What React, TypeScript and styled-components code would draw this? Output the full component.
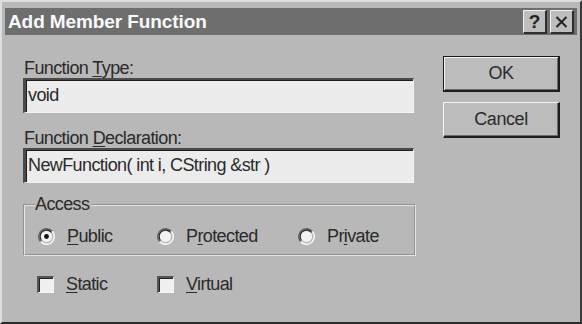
import styled, { createGlobalStyle } from 'styled-components'

const GlobalStyle = createGlobalStyle`
  html, body {
    margin: 0;
    padding: 0;
    background: #b8b8b8;
  }
  * {
    box-sizing: border-box;
  }
`;

const Window = styled.div`
  width: 582px;
  height: 324px;
  background: #b8b8b8;
  border-top: 2px solid #dedede;
  border-left: 2px solid #dedede;
  border-right: 2px solid #3a3a3a;
  border-bottom: 2px solid #2a2a2a;
  padding: 5px 3px 3px 3px;
  font-family: "Liberation Sans", Arial, sans-serif;
  color: #2a2a2a;
  display: flex;
  flex-direction: column;
`;

const TitleBar = styled.div`
  height: 27px;
  margin-top: 1px;
  background: #6e6e6e;
  display: flex;
  align-items: center;
  justify-content: space-between;
  padding: 0 3px 0 3px;
`;

const Title = styled.span`
  color: #fafafa;
  font-weight: bold;
  font-size: 19px;
  letter-spacing: -0.1px;
  line-height: 27px;
`;

const TitleButtons = styled.div`
  display: flex;
  gap: 3px;
  margin-top: 1px;
`;

const TitleButton = styled.div`
  width: 24px;
  height: 24px;
  background: #bdbdbd;
  border-top: 1px solid #f2f2f2;
  border-left: 1px solid #f2f2f2;
  border-right: 2px solid #2e2e2e;
  border-bottom: 2px solid #2e2e2e;
  display: flex;
  align-items: center;
  justify-content: center;
  font-size: 19px;
  font-weight: bold;
  color: #222;
  line-height: 1;
`;

const Body = styled.div`
  display: flex;
  padding-left: 18px;
`;

const LeftColumn = styled.div`
  width: 393px;
  padding-top: 24px;
  display: flex;
  flex-direction: column;
`;

const FieldLabel = styled.div<{ $top?: number }>`
  font-size: 18px;
  letter-spacing: -0.6px;
  line-height: 19px;
  padding-left: 1px;
  margin-top: ${(p) => p.$top ?? 0}px;
`;

const TextBox = styled.div`
  width: 391px;
  height: 35px;
  background: #ececec;
  border-top: 2px solid #4a4a4a;
  border-left: 3px solid #4a4a4a;
  border-right: 1px solid #f4f4f4;
  border-bottom: 1px solid #f4f4f4;
  box-shadow: inset 1px 1px 0 #1e1e1e;
  font-size: 18px;
  letter-spacing: -0.6px;
  line-height: 30px;
  padding-left: 2px;
  white-space: nowrap;
`;

const GroupBox = styled.fieldset`
  margin: 12px 0 0 0;
  width: 393px;
  border: 2px groove #e6e6e6;
  padding: 13px 0 8px 10px;
  min-width: 0;
`;

const Legend = styled.legend`
  font-size: 18px;
  letter-spacing: -0.6px;
  line-height: 19px;
  padding: 0 2px 0 0;
`;

const RadioRow = styled.div`
  display: grid;
  grid-template-columns: 119px 141px auto;
  padding-left: 3px;
`;

const Option = styled.div`
  display: flex;
  align-items: center;
  gap: 12px;
  height: 19px;
  font-size: 18px;
  letter-spacing: -0.6px;
  line-height: 19px;
`;

const CheckRow = styled.div`
  display: grid;
  grid-template-columns: 120px auto;
  padding-left: 14px;
  margin-top: 19px;
`;

const CheckBox = styled.div`
  width: 17px;
  height: 17px;
  background: #f0f0f0;
  border-top: 2px solid #555;
  border-left: 2px solid #555;
  border-right: 1px solid #f6f6f6;
  border-bottom: 1px solid #f6f6f6;
  box-shadow: inset 1px 1px 0 #222;
`;

const RightColumn = styled.div`
  margin-left: 27px;
  padding-top: 21px;
  display: flex;
  flex-direction: column;
  gap: 10px;
`;

const Button = styled.div<{ $default?: boolean }>`
  width: 117px;
  height: 36px;
  background: #bcbcbc;
  border-top: 1px solid ${(p) => (p.$default ? '#1a1a1a' : '#f4f4f4')};
  border-left: 1px solid ${(p) => (p.$default ? '#1a1a1a' : '#f4f4f4')};
  border-right: 2px solid #1e1e1e;
  border-bottom: 2px solid #1e1e1e;
  box-shadow: ${(p) =>
    p.$default
      ? 'inset 1px 1px 0 #f4f4f4, inset -1px -1px 0 #6a6a6a'
      : 'inset -1px -1px 0 #6a6a6a'};
  display: flex;
  align-items: center;
  justify-content: center;
  font-size: 18px;
  letter-spacing: -0.4px;
`;

const Key = styled.span`
  text-decoration: underline;
  text-underline-offset: 2px;
`;

const Radio = ({ checked }: { checked?: boolean }) => (
  <svg width="17" height="17" viewBox="0 0 17 17">
    <path d="M14.5 3.5 A7.5 7.5 0 0 0 2.5 13.5" fill="none" stroke="#666" strokeWidth="1.5" />
    <path d="M13.5 4.5 A6 6 0 0 0 3.5 12.5" fill="none" stroke="#222" strokeWidth="1.2" />
    <circle cx="8.5" cy="8.5" r="5.6" fill="#f2f2f2" />
    <path d="M2.8 13.8 A7.5 7.5 0 0 0 14.2 3.2" fill="none" stroke="#f8f8f8" strokeWidth="1.5" />
    {checked && <circle cx="8.5" cy="8.5" r="2.4" fill="#111" />}
  </svg>
);

export default function App() {
  return (
    <>
      <GlobalStyle />
      <Window>
        <TitleBar>
          <Title>Add Member Function</Title>
          <TitleButtons>
            <TitleButton>?</TitleButton>
            <TitleButton>
              <svg width="13" height="12" viewBox="0 0 13 12">
                <path d="M1.5 1 L11.5 11 M11.5 1 L1.5 11" stroke="#222" strokeWidth="2" />
              </svg>
            </TitleButton>
          </TitleButtons>
        </TitleBar>
        <Body>
          <LeftColumn>
            <FieldLabel>
              Function <Key>T</Key>ype:
            </FieldLabel>
            <TextBox>void</TextBox>
            <FieldLabel $top={16}>
              Function <Key>D</Key>eclaration:
            </FieldLabel>
            <TextBox>NewFunction( int i, CString &amp;str )</TextBox>
            <GroupBox>
              <Legend>Access</Legend>
              <RadioRow>
                <Option>
                  <Radio checked />
                  <span>
                    <Key>P</Key>ublic
                  </span>
                </Option>
                <Option>
                  <Radio />
                  <span>
                    P<Key>r</Key>otected
                  </span>
                </Option>
                <Option>
                  <Radio />
                  <span>
                    Pr<Key>i</Key>vate
                  </span>
                </Option>
              </RadioRow>
            </GroupBox>
            <CheckRow>
              <Option>
                <CheckBox />
                <span>
                  <Key>S</Key>tatic
                </span>
              </Option>
              <Option>
                <CheckBox />
                <span>
                  <Key>V</Key>irtual
                </span>
              </Option>
            </CheckRow>
          </LeftColumn>
          <RightColumn>
            <Button $default>OK</Button>
            <Button>Cancel</Button>
          </RightColumn>
        </Body>
      </Window>
    </>
  );
}
